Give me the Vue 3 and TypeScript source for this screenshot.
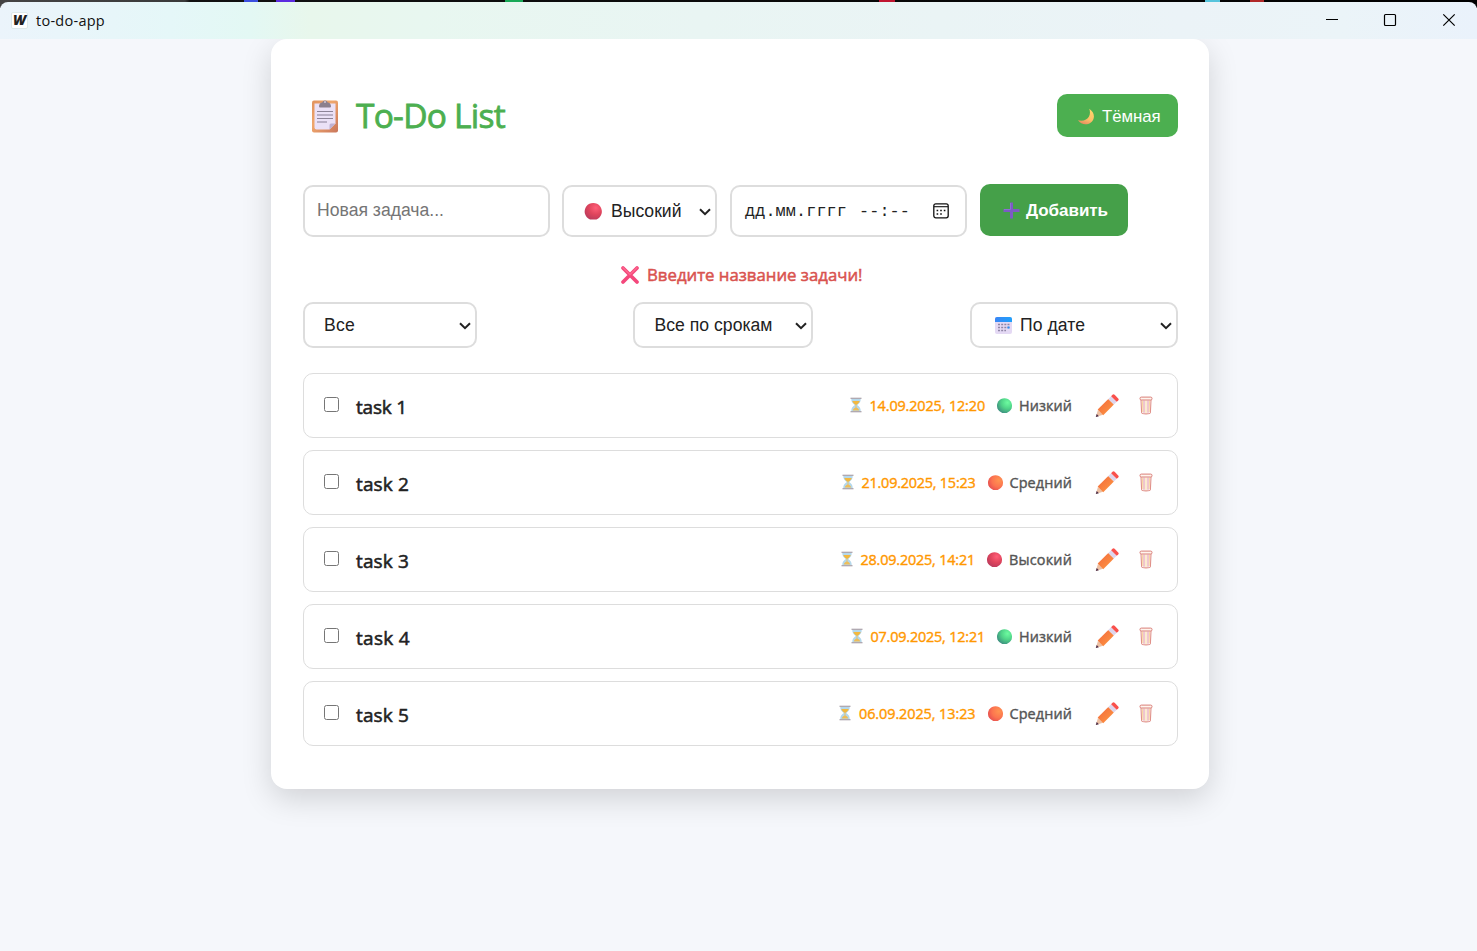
<script setup lang="ts">
type Level = 'low' | 'mid' | 'high'

interface Task {
  title: string
  titleWidth: number
  due: string
  dueWidth: number
  level: Level
}

const tasks: Task[] = [
  { title: 'task 1', titleWidth: 51, due: '14.09.2025, 12:20', dueWidth: 115.5, level: 'low' },
  { title: 'task 2', titleWidth: 53, due: '21.09.2025, 15:23', dueWidth: 114, level: 'mid' },
  { title: 'task 3', titleWidth: 53, due: '28.09.2025, 14:21', dueWidth: 114.5, level: 'high' },
  { title: 'task 4', titleWidth: 54, due: '07.09.2025, 12:21', dueWidth: 114.5, level: 'low' },
  { title: 'task 5', titleWidth: 53, due: '06.09.2025, 13:23', dueWidth: 116.5, level: 'mid' },
]

const levels: Record<Level, { label: string; width: number }> = {
  low: { label: 'Низкий', width: 53 },
  mid: { label: 'Средний', width: 62.5 },
  high: { label: 'Высокий', width: 63 },
}

// Spreads the letters so that a label takes exactly the given width.
const vFit = {
  mounted(el: HTMLElement, binding: { value: number }) {
    const count = (el.textContent ?? '').length
    const natural = el.getBoundingClientRect().width
    el.style.letterSpacing = `${(binding.value - natural) / count}px`
  },
}
</script>

<template>
  <div class="window">
    <div class="backdrop">
      <i class="b1"></i><i class="b2"></i><i class="b3"></i><i class="b4"></i><i class="b5"></i><i class="b6"></i>
    </div>
    <header class="titlebar">
      <span class="logo">W</span>
      <span class="app-name"><span v-fit="69">to-do-app</span></span>
      <svg class="controls" width="140" height="37" viewBox="0 0 140 37" fill="none" stroke="#000">
        <path d="M9 17.5h12" />
        <rect x="67.5" y="12.5" width="11" height="11" rx="1" stroke-width="1.2" />
        <path d="M126.3 12.3l11.4 11.4M137.7 12.3l-11.4 11.4" stroke-width="1.2" />
      </svg>
    </header>

    <svg class="defs" width="0" height="0">
      <defs>
        <radialGradient id="g-high" cx=".65" cy=".3" r=".8"><stop offset="0" stop-color="#ff5f78" /><stop offset=".5" stop-color="#e0455d" /><stop offset="1" stop-color="#b73a5c" /></radialGradient>
        <radialGradient id="g-mid" cx=".72" cy=".35" r=".75"><stop offset="0" stop-color="#ff9450" /><stop offset=".6" stop-color="#fc7450" /><stop offset="1" stop-color="#e85350" /></radialGradient>
        <radialGradient id="g-low" cx=".7" cy=".3" r=".8"><stop offset="0" stop-color="#6dfba0" /><stop offset=".5" stop-color="#50d488" /><stop offset="1" stop-color="#3d8c80" /></radialGradient>
        <linearGradient id="g-moon" x1=".7" y1="0" x2=".3" y2="1"><stop offset="0" stop-color="#ffd76a" /><stop offset=".6" stop-color="#fcbf68" /><stop offset="1" stop-color="#e58b5e" /></linearGradient>
        <linearGradient id="g-board" x1="0" y1="0" x2="1" y2="1"><stop offset="0" stop-color="#e0925f" /><stop offset=".4" stop-color="#efa66c" /><stop offset="1" stop-color="#c9765c" /></linearGradient>
        <linearGradient id="g-cal" x1="0" y1="0" x2="1" y2="0"><stop offset="0" stop-color="#3a86f5" /><stop offset="1" stop-color="#1fa0fb" /></linearGradient>
        <linearGradient id="g-pen" x1="0" y1="0" x2="1" y2="1"><stop offset="0" stop-color="#f2683c" /><stop offset="1" stop-color="#ff9a42" /></linearGradient>
      </defs>
    </svg>

    <main class="card">
      <div class="head">
        <svg class="clipboard" width="28" height="34" viewBox="0 0 28 34">
          <rect x="1" y="1.5" width="26" height="32" rx="2" fill="url(#g-board)" />
          <path d="M3.500 4.500h21v20l-6 6h-13a2 2 0 0 1-2-2z" fill="#ebe1f7" />
          <path d="M24.500 24.500l-6 6v-4.500a1.500 1.500 0 0 1 1.500-1.500z" fill="#bfb2d4" />
          <path d="M8 7.500c0-2 1.200-4 3.200-4a3 3 0 0 1 5.600 0c2 0 3.200 2 3.200 4a1 1 0 0 1-1 1H9a1 1 0 0 1-1-1z" fill="#8b7f8e" />
          <circle cx="14" cy="3" r="1" fill="#d3c8d4" />
          <path d="M6 12.500h16M6 19.500h16" stroke="#8d8498" stroke-width="1" />
          <path d="M6 16h16M6 23h10" stroke="#aaa0b8" stroke-width="1.600" />
        </svg>
        <h1><span v-fit="149">To-Do List</span></h1>
        <button class="theme" type="button">
          <svg width="18" height="18" viewBox="0 0 18 18">
            <path d="M12.200.8C18 4.500 18.400 11.200 13.600 14.700 9.700 17.500 4 16.800 1 12.300c5.400 1.100 9.300-.6 11-3.900 1.300-2.500 1.200-5.200.2-7.600z" fill="url(#g-moon)" />
          </svg>
          <span v-fit="58.5">Тёмная</span>
        </button>
      </div>

      <form class="entry" @submit.prevent>
        <div class="field name"><span v-fit="127">Новая задача...</span></div>
        <div class="field priority">
          <svg width="18" height="18" viewBox="0 0 18 18"><path d="M6 17.500a8.600 8.600 0 1 1 6.500 0z" fill="url(#g-high)" /></svg>
          <span v-fit="70.5">Высокий</span>
          <svg class="chevron" width="12" height="8" viewBox="0 0 12 8"><path d="M1 1.200l5 5 5-5" /></svg>
        </div>
        <div class="field date">
          <span class="mono" v-fit="102">дд.мм.гггг</span>
          <span class="mono time" v-fit="51">--:--</span>
          <svg class="picker" width="16" height="16" viewBox="0 0 16 16">
            <rect x=".8" y=".8" width="14.400" height="14" rx="2" fill="none" stroke="#111" stroke-width="1.300" />
            <path d="M1 3.700h14" stroke="#111" stroke-width="1.100" />
            <path d="M3.600 7.500h1.600M7.200 7.500h1.600M10.800 7.500h1.600M3.600 11h1.600M7.200 11h1.600" stroke="#111" stroke-width="1.600" />
          </svg>
        </div>
        <button class="add" type="button">
          <svg width="17" height="17" viewBox="0 0 17 17">
            <path d="M7 .5h3V7h6.500v3H10v6.500H7V10H.5V7H7z" fill="#7c5ac4" />
            <path d="M7.500 1v6.500H1" fill="none" stroke="#9378d8" stroke-width=".7" />
          </svg>
          <span v-fit="82">Добавить</span>
        </button>
      </form>

      <p class="error">
        <svg width="20" height="20" viewBox="0 0 20 20" fill="none" stroke-linecap="round">
          <path d="M3 3l14 14M17 3L3 17" stroke="#f4487c" stroke-width="3.800" />
          <path d="M3 2.700l7 7 7-7" stroke="#ff6a90" stroke-width="1.300" />
        </svg>
        <span v-fit="215.5">Введите название задачи!</span>
      </p>

      <div class="filters">
        <div class="field f-status">
          <span v-fit="31">Все</span>
          <svg class="chevron" width="12" height="8" viewBox="0 0 12 8"><path d="M1 1.200l5 5 5-5" /></svg>
        </div>
        <div class="field f-due">
          <span v-fit="118">Все по срокам</span>
          <svg class="chevron" width="12" height="8" viewBox="0 0 12 8"><path d="M1 1.200l5 5 5-5" /></svg>
        </div>
        <div class="field f-sort">
          <svg width="17" height="17" viewBox="0 0 17 17">
            <rect width="17" height="17" rx="2" fill="#e4d9f4" />
            <path d="M0 5V2a2 2 0 0 1 2-2h13a2 2 0 0 1 2 2v3z" fill="url(#g-cal)" />
            <path d="M3 7.500h11.500M3 10.500h11.500M3 13.500h8" stroke="#9086a6" stroke-width="1.700" stroke-dasharray="2 1.170" />
            <path d="M12.500 10.500h2" stroke="#2b8cf6" stroke-width="2" />
          </svg>
          <span v-fit="65">По дате</span>
          <svg class="chevron" width="12" height="8" viewBox="0 0 12 8"><path d="M1 1.200l5 5 5-5" /></svg>
        </div>
      </div>

      <ul class="tasks">
        <li v-for="task in tasks" :key="task.title">
          <input type="checkbox" />
          <span class="title"><span v-fit="task.titleWidth">{{ task.title }}</span></span>
          <svg class="glass" width="12" height="16" viewBox="0 0 12 16">
            <path d="M1.300 2h9.400c0 3-1.200 4.500-3.500 6 2.300 1.500 3.500 3 3.500 6H1.300c0-3 1.200-4.500 3.500-6C2.500 6.500 1.300 5 1.300 2z" fill="#b4d8ec" />
            <path d="M2.300 4h7.400C9 6 8 6.800 6 8 4 6.800 3 6 2.300 4z" fill="#f3b83f" />
            <path d="M5.600 8h.8v2.500c1.500.5 2.500 1.500 2.800 3H2.800c.3-1.500 1.300-2.500 2.800-3z" fill="#efbd58" />
            <path d="M.5 1.300h11M.5 14.700h11" stroke="#968d98" stroke-width="1.100" />
          </svg>
          <span class="due" v-fit="task.dueWidth">{{ task.due }}</span>
          <svg class="dot" width="15" height="15" viewBox="0 0 15 15"><path d="M5.300 14.900a7.500 7.500 0 1 1 4.400 0z" :fill="`url(#g-${task.level})`" /></svg>
          <span class="level" v-fit="levels[task.level].width">{{ levels[task.level].label }}</span>
          <svg class="pencil" width="24" height="24" viewBox="0 0 24 24">
            <path d="M.8 23l2.200-7.200 5 5z" fill="#ecc0a4" />
            <path d="M.8 23l.9-3 2.200 2.200z" fill="#4a2c48" />
            <path d="M2.700 15.600L13.300 5l5.600 5.600L8.200 21.200z" fill="url(#g-pen)" />
            <path d="M13.300 5l2.800-2.800 5.600 5.600-2.800 2.800z" fill="#ddd5ec" />
            <path d="M16.100 2.200l1.400-1.400a1.500 1.500 0 0 1 2.100 0l3.600 3.600a1.500 1.500 0 0 1 0 2.100l-1.500 1.300z" fill="#f9504c" />
          </svg>
          <svg class="trash" width="14" height="19" viewBox="0 0 14 19" fill="none">
            <path d="M2 4l.6 12.500c.1.900 1.900 1.400 4.400 1.400s4.300-.5 4.400-1.400L12 4" stroke="#e0918a" stroke-width="1.100" />
            <path d="M5 4.500v12.300M9 4.500v12.300" stroke="#dd7f99" stroke-width=".9" />
            <path d="M3.400 4.500l.4 11.500M7 4.500v12.700M10.600 4.500l-.4 11.500" stroke="#f7d295" stroke-width=".9" />
            <rect x="1" y="1.100" width="12" height="2.900" rx="1.300" stroke="#d97e78" stroke-width="1" fill="#fff5ee" />
          </svg>
        </li>
      </ul>
    </main>
  </div>
</template>

<style>
html,
body {
  margin: 0;
  background: #f5f7fb;
}
</style>

<style scoped>
* {
  box-sizing: border-box;
}

.window {
  height: 951px;
  overflow: hidden;
  background: #f5f7fb;
  color: #222;
  font-family: "Open Sans", "Noto Sans", sans-serif;
  white-space: nowrap;
}

.defs {
  position: absolute;
}

.backdrop {
  display: flex;
  height: 8px;
  margin-bottom: -6px;
  background: linear-gradient(90deg, #444 0, #3a3a3a 185px, #111 190px, #000 100%);
}
.backdrop i {
  height: 2px;
}
.b1 { width: 14px; margin-left: 244px; background: #3b4fe0; }
.b2 { width: 19px; margin-left: 18px; background: #5b2be0; }
.b3 { width: 18px; margin-left: 210px; background: #18a957; }
.b4 { width: 16px; margin-left: 356px; background: #c01530; }
.b5 { width: 15px; margin-left: 310px; background: #56c4dc; }
.b6 { width: 14px; margin-left: 30px; background: #b02828; }

.titlebar {
  position: relative;
  z-index: 2;
  display: flex;
  align-items: center;
  height: 37px;
  padding-left: 11px;
  border-radius: 8px 8px 0 0;
  background: linear-gradient(90deg, #ebf4fb 0, #e5f7f8 170px, #e3f8f4 250px, #e8f7ec 310px, #e8f7f0 420px, #e9f5f3 700px, #ebf3f7 1180px, #ebf4f8 1340px, #eaf2fb 1477px);
}
.logo {
  width: 17px;
  height: 17px;
  border: 1px solid #dde9ea;
  border-radius: 2px;
  background: #fff;
  color: #222;
  font: italic 900 14px/14px "Open Sans", sans-serif;
  text-align: center;
}
.app-name {
  width: 80px;
  margin-left: 8px;
  font-size: 14.500px;
  line-height: 20px;
  color: #111;
}
.controls {
  margin-left: auto;
  margin-right: 20px;
}

.card {
  width: 938px;
  height: 750px;
  margin-left: 271px;
  padding: 55px 31px 0 32px;
  border-radius: 16px;
  background: #fff;
  box-shadow: 0 10px 30px rgba(0, 0, 0, 0.15);
}

.head {
  display: flex;
  align-items: center;
  height: 43px;
}
.clipboard {
  margin-left: 8px;
}
h1 {
  margin: -2px 0 0 17px;
  font-size: 33.500px;
  font-weight: 400;
  line-height: 42px;
  color: #4caf50;
  -webkit-text-stroke: 0.8px currentColor;
}
button {
  display: flex;
  align-items: center;
  border: 0;
  border-radius: 10px;
  color: #fff;
  font-family: "Liberation Sans", Arial, sans-serif;
}
.theme {
  width: 121px;
  height: 43px;
  margin-left: auto;
  padding: 2px 0 0 20px;
  gap: 7px;
  background: #4caf50;
  font-size: 16.800px;
}

.entry {
  display: flex;
  height: 52px;
  margin-top: 48px;
}
.field {
  display: flex;
  align-items: center;
  border: 2px solid #ddd;
  border-radius: 10px;
  background: #fff;
  font: 17.600px "Liberation Sans", Arial, sans-serif;
}
.chevron {
  margin-left: auto;
  margin-top: 2px;
  fill: none;
  stroke: #222;
  stroke-width: 2;
}
.name {
  width: 247px;
  padding: 0 0 2px 12px;
  color: #757575;
}
.priority {
  width: 155px;
  margin-left: 12px;
  padding: 0 4px 0 20px;
}
.priority span {
  margin-left: 9px;
}
.date {
  width: 237px;
  margin-left: 13px;
  padding-left: 13px;
}
.mono {
  padding-top: 1px;
  font: 16.800px "Liberation Mono", monospace;
}
.time {
  margin-left: 12px;
}
.picker {
  margin-left: auto;
  margin-right: 16px;
  margin-top: -1px;
}
.add {
  width: 148px;
  height: 52px;
  margin: -1px 0 0 13px;
  padding: 1px 0 0 23px;
  gap: 6px;
  background: #45a049;
  font-size: 17px;
  font-weight: 700;
}

.error {
  display: flex;
  align-items: center;
  gap: 7px;
  height: 24px;
  margin: 26px 0 0 317px;
  color: #d9534f;
  font-size: 16.800px;
  -webkit-text-stroke: 0.5px currentColor;
}
.error span {
  margin-top: -1px;
}

.filters {
  display: flex;
  justify-content: space-between;
  height: 46px;
  margin-top: 15px;
}
.filters .field {
  padding: 0 4px 0 19px;
}
.filters .chevron {
  margin-top: 1px;
}
.f-status { width: 174px; }
.f-due { width: 180px; }
.f-sort { width: 208px; }
.filters .f-due { padding-left: 20px; margin-left: -2px; }
.filters .f-sort { padding-left: 23px; }
.f-sort span { margin-left: 8px; }

.tasks {
  display: flex;
  flex-direction: column;
  gap: 12px;
  margin: 25px 0 0;
  padding: 0;
  list-style: none;
}
li {
  display: flex;
  align-items: center;
  height: 65px;
  padding: 0 24px 0 20px;
  border: 1px solid #ddd;
  border-radius: 10px;
}
input {
  width: 15px;
  height: 15px;
  margin: -2px 0 0;
  border: 1px solid #767676;
  border-radius: 2.500px;
  background: #fff;
  appearance: none;
}
.title {
  margin: 2px auto 0 17px;
  font-size: 19px;
  -webkit-text-stroke: 0.55px currentColor;
}
.due,
.level {
  margin-top: -1px;
  font-size: 14.400px;
  -webkit-text-stroke: 0.4px currentColor;
}
.glass {
  margin-top: -1px;
}
.due {
  margin-left: 8px;
  color: #ff9800;
}
.dot {
  margin-left: 12px;
}
.level {
  margin-left: 7px;
  color: #555;
}
.pencil {
  margin-left: 23px;
}
.trash {
  margin-left: 20px;
}
</style>
